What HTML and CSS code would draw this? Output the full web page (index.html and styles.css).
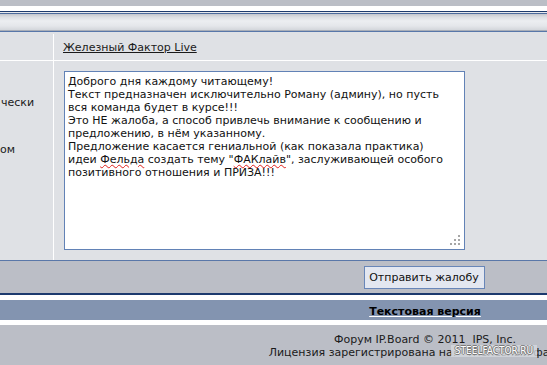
FILE: index.html
```html
<!DOCTYPE html>
<html lang="ru">
<head>
<meta charset="utf-8">
<title>Жалоба</title>
<link rel="stylesheet" href="styles.css">
</head>
<body>
<div class="page">
  <div class="topbar"></div>
  <div class="spacer"></div>
  <div class="header"></div>
  <div class="form">
    <div class="cell label-cell"></div>
    <div class="cell link-cell"><a href="#" class="topic">Железный Фактор Live</a></div>
    <div class="cell label-cell labels">
      <span class="label l1">чески</span>
      <span class="label l2">ом</span>
    </div>
    <div class="cell text-cell">
      <div class="textwrap">
        <div class="textbox" role="textbox"><p>Доброго дня каждому читающему!</p><p>Текст предназначен исключительно Роману (админу), но пусть вся команда будет в курсе!!!</p><p>Это НЕ жалоба, а способ привлечь внимание к сообщению и предложению, в нём указанному.</p><p>Предложение касается гениальной (как показала практика) идеи <span class="spell">Фельда</span> создать тему "<span class="spell">ФАКлайв</span>", заслуживающей особого позитивного отношения и ПРИЗА!!!</p></div>
        <svg class="grip" width="10" height="10" viewBox="0 0 10 10"><g fill="#a6a6a6"><rect x="8" y="0" width="2" height="2"/><rect x="4" y="4" width="2" height="2"/><rect x="8" y="4" width="2" height="2"/><rect x="0" y="8" width="2" height="2"/><rect x="4" y="8" width="2" height="2"/><rect x="8" y="8" width="2" height="2"/></g></svg>
      </div>
    </div>
  </div>
  <div class="actions"><button class="submit">Отправить жалобу</button></div>
  <div class="spacer"></div>
  <div class="band"><a href="#" class="lofi">Текстовая версия</a></div>
  <div class="spacer"></div>
  <div class="footer">
    <div>Форум IP.Board © 2011&nbsp; IPS, Inc.</div>
    <div>Лицензия зарегистрирована на: &nbsp;"Железный фактор"</div>
  </div>
</div>
<div class="watermark">STEELFACTOR.RU</div>
</body>
</html>
```
FILE: styles.css
```css
html, body {
  margin: 0;
  padding: 0;
  width: 547px;
  height: 365px;
  overflow: hidden;
  background: #bbbec6;
}
body {
  position: relative;
  font-family: "DejaVu Sans", Verdana, sans-serif;
  font-size: 11px;
  line-height: 13px;
  color: #1a1a1a;
}
.page {
  width: 850px;
  display: flex;
  flex-direction: column;
}
.topbar {
  height: 6px;
  background: #bbbec6;
}
.spacer {
  height: 5px;
  background: #fff;
}
.header {
  height: 23px;
  background: linear-gradient(to bottom,
    #1d3a6c 0, #1d3a6c 1px,
    #e6e8ec 1px, #e6e8ec 2px,
    #4b6a9c 2px, #4b6a9c 3px,
    #c3c6cd 3px, #dcdee2 6px, #eceef1 10px, #e4e6ea 15px, #d3d6db 19px,
    #a9aeb8 19px, #a9aeb8 20px,
    #5877a9 20px, #5877a9 21px,
    #dfe1e5 21px, #dfe1e5 23px);
}
.form {
  display: grid;
  grid-template-columns: 53px 1fr;
  grid-template-rows: 26px 199px;
  gap: 1px;
  background: #fff;
}
.cell {
  background: #dfe1e5;
}
.link-cell {
  display: flex;
  align-items: center;
  padding-left: 9px;
  padding-top: 1px;
}
.topic {
  color: #1a1a1a;
  text-decoration: underline;
}
.labels {
  display: flex;
  flex-direction: column;
  align-items: flex-start;
}
.label.l1 { margin-top: 35px; margin-left: 1px; }
.label.l2 { margin-top: 34px; }
.text-cell {
  padding: 10px 0 0 10px;
}
.textwrap {
  position: relative;
  width: 401px;
  height: 179px;
}
.textbox {
  box-sizing: border-box;
  width: 401px;
  height: 179px;
  background: #fff;
  border: 1px solid #6282b6;
  padding: 3px 16px 3px 3px;
  color: #111;
}
.textbox p {
  margin: 0;
}
.spell {
  display: inline-block;
  height: 13px;
  line-height: 13px;
  vertical-align: top;
  text-decoration: underline wavy #e0201c;
  text-decoration-thickness: 1px;
  text-underline-offset: 1px;
}
.grip {
  position: absolute;
  right: 5px;
  bottom: 5px;
}
.actions {
  height: 27px;
  border-top: 1px solid #5a78a9;
  border-bottom: 2px solid #1c3a6e;
  background: #bbbec6;
  display: flex;
  justify-content: center;
  align-items: flex-start;
  padding-top: 5px;
}
.submit {
  font-family: "DejaVu Sans", Verdana, sans-serif;
  font-size: 11px;
  line-height: 13px;
  height: 23px;
  width: 121px;
  padding: 0 2px;
  margin-left: -2px;
  white-space: nowrap;
  color: #111;
  background: #e3e7f0;
  border: 1px solid #6886b8;
  border-radius: 0;
}
.band {
  height: 20px;
  background: #8394b0;
  display: flex;
  justify-content: center;
  align-items: center;
}
.lofi {
  font-weight: bold;
  color: #000;
  text-decoration: underline;
  text-decoration-color: #fff;
  margin-top: 2px;
}
.footer {
  background: #bbbec6;
  height: 40px;
  padding-top: 8px;
  text-align: center;
  color: #1a1a1a;
}
.watermark {
  position: absolute;
  left: 451px;
  top: 345px;
  width: 86px;
  height: 12px;
  background: rgba(214, 216, 221, 0.8);
  color: #fff;
  font-family: "DejaVu Sans Condensed", "DejaVu Sans", sans-serif;
  font-stretch: condensed;
  font-size: 10px;
  line-height: 12px;
  text-align: center;
  white-space: nowrap;
  overflow: hidden;
  text-shadow: 1px 0 0 #7a7a7a, -1px 0 0 #7a7a7a, 0 1px 0 #7a7a7a, 0 -1px 0 #7a7a7a;
}
```
